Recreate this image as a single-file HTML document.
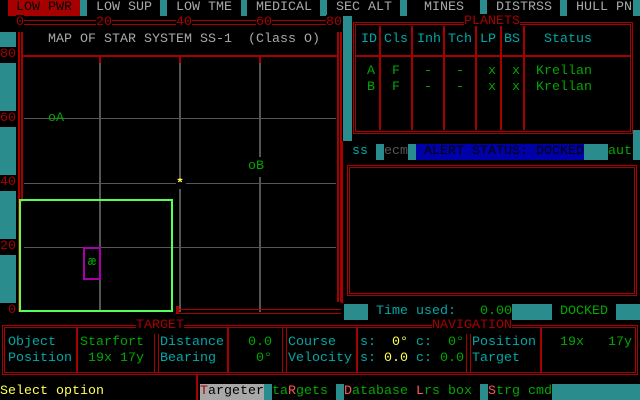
<!DOCTYPE html><html><head><style>
body{margin:0;background:#000;width:640px;height:400px;overflow:hidden;position:relative}
.t{position:absolute;font:13.33px/16px "Liberation Mono",monospace;white-space:pre}
.b{position:absolute}
.ck{position:absolute;background:#2a8c8c}
.g{color:#a8a8a8}.r{color:#a80000}.c{color:#00a8a8}.gr{color:#00a800}.y{color:#ffff55}.lr{color:#ff5555}
.dbl{position:absolute;border:3px double #a80000;box-sizing:border-box}
.vl{position:absolute;background:#a80000;width:2px}
.gl{position:absolute;background:#555}
</style></head><body>
<!-- top bar -->
<div class="b" style="left:8px;top:0;width:72px;height:16px;background:#a80000"></div>
<div class="t" style="left:16px;top:0;color:#000">LOW PWR</div>
<div class="t g" style="left:96px;top:0">LOW SUP</div>
<div class="t g" style="left:176px;top:0">LOW TME</div>
<div class="t g" style="left:256px;top:0">MEDICAL</div>
<div class="t g" style="left:336px;top:0">SEC ALT</div>
<div class="t g" style="left:424px;top:0">MINES</div>
<div class="t g" style="left:496px;top:0">DISTRSS</div>
<div class="t g" style="left:576px;top:0">HULL PN</div>
<div class="ck" style="left:80px;top:0;width:7px;height:16px"></div>
<div class="ck" style="left:160px;top:0;width:7px;height:16px"></div>
<div class="ck" style="left:241px;top:0;width:6px;height:16px"></div>
<div class="ck" style="left:320px;top:0;width:7px;height:16px"></div>
<div class="ck" style="left:400px;top:0;width:7px;height:16px"></div>
<div class="ck" style="left:480px;top:0;width:7px;height:16px"></div>
<div class="ck" style="left:560px;top:0;width:7px;height:16px"></div>
<div class="ck" style="left:633px;top:0;width:7px;height:16px"></div>
<!-- left checker column -->
<div class="ck" style="left:0;top:32px;width:16px;height:280px"></div>
<div class="b" style="left:0;top:47px;width:16px;height:16px;background:#000"></div>
<div class="b" style="left:0;top:111px;width:16px;height:16px;background:#000"></div>
<div class="b" style="left:0;top:175px;width:16px;height:16px;background:#000"></div>
<div class="b" style="left:0;top:239px;width:16px;height:16px;background:#000"></div>
<div class="b" style="left:0;top:303px;width:16px;height:16px;background:#000"></div>
<div class="t r" style="left:0;top:47px">80</div>
<div class="t r" style="left:0;top:111px">60</div>
<div class="t r" style="left:0;top:175px">40</div>
<div class="t r" style="left:0;top:239px">20</div>
<div class="t r" style="left:8px;top:303px">0</div>
<!-- ruler -->
<div class="b" style="left:16px;top:20px;width:326px;height:3px;border-top:1px solid #a80000;border-bottom:1px solid #a80000"></div>
<div class="t r" style="left:16px;top:15px;background:#000">0</div>
<div class="t r" style="left:96px;top:15px;background:#000">20</div>
<div class="t r" style="left:176px;top:15px;background:#000">40</div>
<div class="t r" style="left:256px;top:15px;background:#000">60</div>
<div class="t r" style="left:326px;top:15px;background:#000">80</div>
<!-- map frame -->
<div class="b" style="left:18px;top:32px;width:2px;height:280px;background:#a80000"></div>
<div class="b" style="left:21px;top:32px;width:2px;height:170px;background:#a80000"></div>
<div class="b" style="left:337px;top:32px;width:2px;height:270px;background:#a80000"></div>
<div class="b" style="left:340px;top:32px;width:2px;height:270px;background:#a80000"></div>
<div class="ck" style="left:343px;top:16px;width:9px;height:125px"></div>
<div class="t g" style="left:48px;top:32px">MAP OF STAR SYSTEM SS-1  (Class O)</div>
<div class="b" style="left:22px;top:55px;width:315px;height:2px;background:#a80000"></div>
<!-- grid -->
<div class="gl" style="left:99px;top:57px;width:2px;height:255px"></div>
<div class="gl" style="left:179px;top:57px;width:2px;height:255px"></div>
<div class="gl" style="left:259px;top:57px;width:2px;height:100px"></div>
<div class="gl" style="left:259px;top:177px;width:2px;height:135px"></div>
<div class="b" style="left:99px;top:57px;width:2px;height:6px;background:#a80000"></div>
<div class="b" style="left:179px;top:57px;width:2px;height:6px;background:#a80000"></div>
<div class="b" style="left:259px;top:57px;width:2px;height:6px;background:#a80000"></div>
<div class="gl" style="left:24px;top:118px;width:312px;height:1px"></div>
<div class="gl" style="left:24px;top:183px;width:312px;height:1px"></div>
<div class="gl" style="left:24px;top:247px;width:312px;height:1px"></div>
<div class="t gr" style="left:48px;top:111px">oA</div>
<div class="t gr" style="left:248px;top:159px">oB</div>
<div class="b" style="left:176px;top:177px;width:10px;height:12px;background:#000"></div>
<div class="t y" style="left:176px;top:177px;font-weight:bold">*</div>
<div class="b" style="left:19px;top:199px;width:154px;height:113px;border:2px solid #55ff55;box-sizing:border-box;background:transparent"></div>
<div class="b" style="left:83px;top:247px;width:18px;height:33px;border:2px solid #a800a8;box-sizing:border-box;background:#000"></div>
<div class="t gr" style="left:88px;top:255px">æ</div>
<div class="b" style="left:176px;top:306px;width:3px;height:8px;background:#a80000"></div>
<div class="b" style="left:176px;top:309px;width:165px;height:3px;border-top:1px solid #a80000;border-bottom:1px solid #a80000"></div>
<!-- planets -->
<div class="dbl" style="left:353px;top:22px;width:280px;height:112px"></div>
<div class="t r" style="left:464px;top:14px;background:#000">PLANETS</div>
<div class="vl" style="left:379px;top:26px;height:104px"></div>
<div class="vl" style="left:411px;top:26px;height:104px"></div>
<div class="vl" style="left:443px;top:26px;height:104px"></div>
<div class="vl" style="left:475px;top:26px;height:104px"></div>
<div class="vl" style="left:500px;top:26px;height:104px"></div>
<div class="vl" style="left:523px;top:26px;height:104px"></div>
<div class="b" style="left:356px;top:55px;width:274px;height:2px;background:#a80000"></div>
<div class="t c" style="left:361px;top:32px">ID</div>
<div class="t c" style="left:384px;top:32px">Cls</div>
<div class="t c" style="left:417px;top:32px">Inh</div>
<div class="t c" style="left:448px;top:32px">Tch</div>
<div class="t c" style="left:480px;top:32px">LP</div>
<div class="t c" style="left:504px;top:32px">BS</div>
<div class="t c" style="left:544px;top:32px">Status</div>
<div class="t gr" style="left:367px;top:64px">A</div>
<div class="t gr" style="left:392px;top:64px">F</div>
<div class="t gr" style="left:424px;top:64px">-</div>
<div class="t gr" style="left:456px;top:64px">-</div>
<div class="t gr" style="left:488px;top:64px">x</div>
<div class="t gr" style="left:512px;top:64px">x</div>
<div class="t gr" style="left:536px;top:64px">Krellan</div>
<div class="t gr" style="left:367px;top:80px">B</div>
<div class="t gr" style="left:392px;top:80px">F</div>
<div class="t gr" style="left:424px;top:80px">-</div>
<div class="t gr" style="left:456px;top:80px">-</div>
<div class="t gr" style="left:488px;top:80px">x</div>
<div class="t gr" style="left:512px;top:80px">x</div>
<div class="t gr" style="left:536px;top:80px">Krellan</div>
<!-- status row -->
<div class="t c" style="left:352px;top:144px">ss</div>
<div class="ck" style="left:376px;top:144px;width:8px;height:16px"></div>
<div class="t" style="left:384px;top:144px;color:#555">ecm</div>
<div class="ck" style="left:408px;top:144px;width:8px;height:16px"></div>
<div class="b" style="left:416px;top:144px;width:168px;height:16px;background:#0000a8"></div>
<div class="t" style="left:424px;top:144px;color:#000">ALERT STATUS: DOCKED</div>
<div class="ck" style="left:584px;top:144px;width:24px;height:16px"></div>
<div class="t gr" style="left:608px;top:144px">aut</div>
<div class="ck" style="left:633px;top:130px;width:7px;height:30px"></div>
<div class="b" style="left:341px;top:141px;width:2px;height:162px;background:#a80000"></div>
<div class="dbl" style="left:347px;top:165px;width:290px;height:131px"></div>
<!-- time row -->
<div class="ck" style="left:344px;top:304px;width:24px;height:16px"></div>
<div class="t c" style="left:376px;top:304px">Time used:</div>
<div class="t gr" style="left:480px;top:304px">0.00</div>
<div class="ck" style="left:512px;top:304px;width:40px;height:16px"></div>
<div class="t gr" style="left:560px;top:304px">DOCKED</div>
<div class="ck" style="left:616px;top:304px;width:24px;height:16px"></div>
<!-- bottom panels -->
<div class="dbl" style="left:2px;top:325px;width:636px;height:50px"></div>
<div class="b" style="left:154px;top:328px;width:3px;height:44px;border-left:1px solid #a80000;border-right:1px solid #a80000"></div>
<div class="b" style="left:282px;top:328px;width:3px;height:44px;border-left:1px solid #a80000;border-right:1px solid #a80000"></div>
<div class="b" style="left:466px;top:328px;width:3px;height:44px;border-left:1px solid #a80000;border-right:1px solid #a80000"></div>
<div class="vl" style="left:76px;top:328px;height:44px"></div>
<div class="vl" style="left:227px;top:328px;height:44px"></div>
<div class="vl" style="left:356px;top:328px;height:44px"></div>
<div class="vl" style="left:540px;top:328px;height:44px"></div>
<div class="t r" style="left:136px;top:318px;background:#000">TARGET</div>
<div class="t r" style="left:432px;top:318px;background:#000">NAVIGATION</div>
<div class="t c" style="left:8px;top:335px">Object</div>
<div class="t c" style="left:8px;top:351px">Position</div>
<div class="t gr" style="left:80px;top:335px">Starfort</div>
<div class="t gr" style="left:88px;top:351px">19x 17y</div>
<div class="t c" style="left:160px;top:335px">Distance</div>
<div class="t c" style="left:160px;top:351px">Bearing</div>
<div class="t gr" style="left:248px;top:335px">0.0</div>
<div class="t gr" style="left:256px;top:351px">0°</div>
<div class="t c" style="left:288px;top:335px">Course</div>
<div class="t c" style="left:288px;top:351px">Velocity</div>
<div class="t c" style="left:360px;top:335px">s:</div>
<div class="t c" style="left:360px;top:351px">s:</div>
<div class="t y" style="left:392px;top:335px">0°</div>
<div class="t y" style="left:384px;top:351px">0.0</div>
<div class="t c" style="left:416px;top:335px">c:</div>
<div class="t c" style="left:416px;top:351px">c:</div>
<div class="t gr" style="left:448px;top:335px">0°</div>
<div class="t gr" style="left:440px;top:351px">0.0</div>
<div class="t c" style="left:472px;top:335px">Position</div>
<div class="t c" style="left:472px;top:351px">Target</div>
<div class="t gr" style="left:560px;top:335px">19x</div>
<div class="t gr" style="left:608px;top:335px">17y</div>
<!-- bottom line -->
<div class="vl" style="left:196px;top:374px;height:26px"></div>
<div class="t y" style="left:0;top:384px">Select option</div>
<div class="b" style="left:200px;top:384px;width:64px;height:16px;background:#a8a8a8"></div>
<div class="t" style="left:200px;top:384px;color:#000"><span style="color:#a80000">T</span>argeter</div>
<div class="ck" style="left:264px;top:384px;width:8px;height:16px"></div>
<div class="t gr" style="left:272px;top:384px">ta<span class="lr">R</span>gets</div>
<div class="ck" style="left:336px;top:384px;width:8px;height:16px"></div>
<div class="t gr" style="left:344px;top:384px"><span class="lr">D</span>atabase</div>
<div class="t gr" style="left:416px;top:384px"><span class="lr">L</span>rs box</div>
<div class="ck" style="left:480px;top:384px;width:8px;height:16px"></div>
<div class="t gr" style="left:488px;top:384px"><span class="lr">S</span>trg cmd</div>
<div class="ck" style="left:552px;top:384px;width:88px;height:16px"></div>
</body></html>
